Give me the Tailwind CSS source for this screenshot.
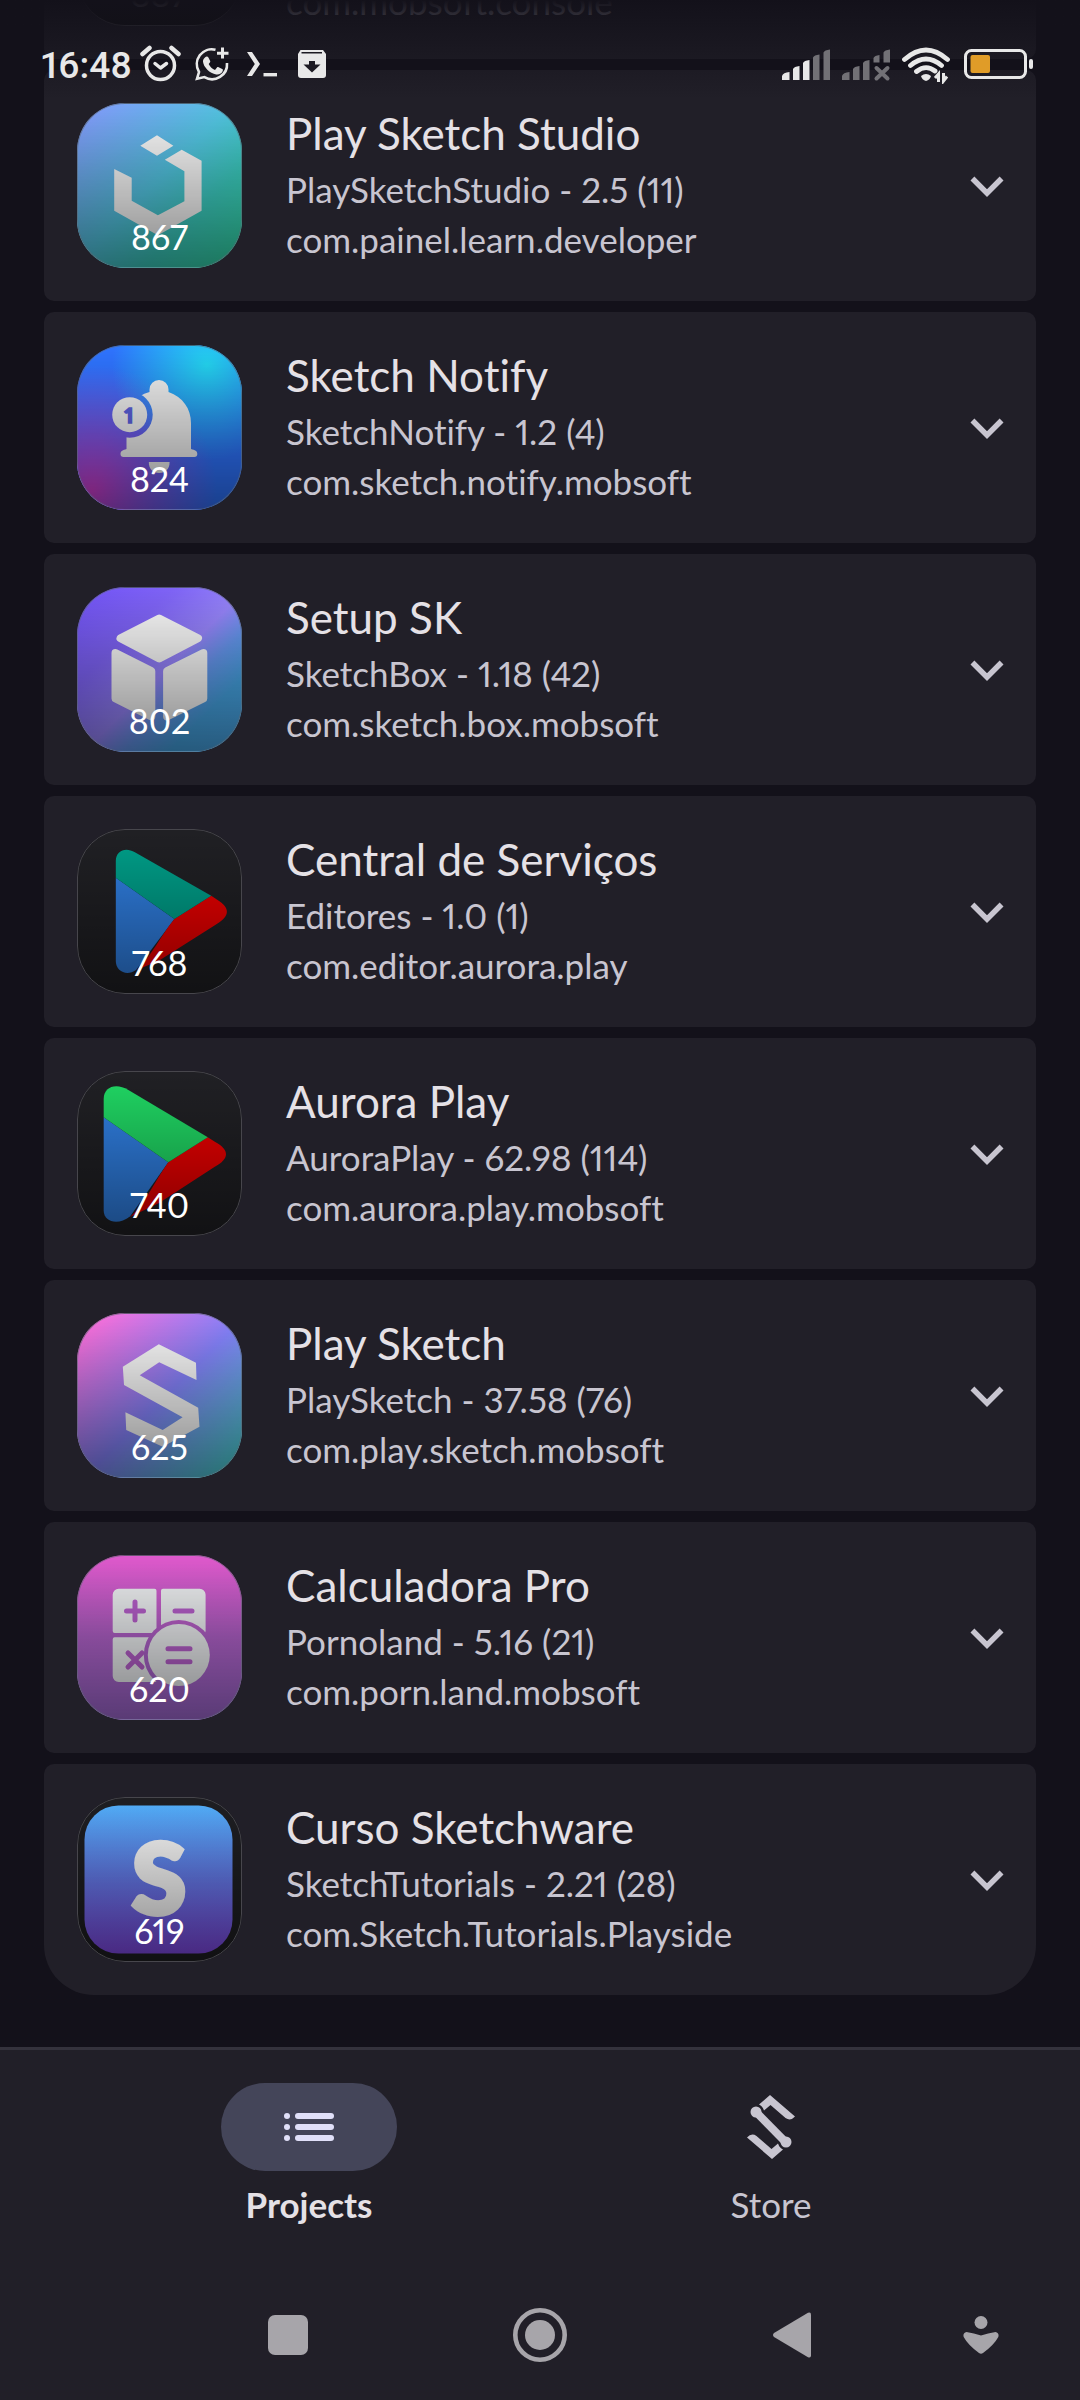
<!DOCTYPE html>
<html lang="en">
<head>
<meta charset="utf-8">
<meta name="viewport" content="width=device-width, initial-scale=1">
<title>Projects</title>
<script src="https://cdn.jsdelivr.net/npm/@tailwindcss/browser@4"></script>
</head>
<body class="relative flex min-h-screen flex-col overflow-x-hidden bg-[#13111a] font-['Lato','Open_Sans',sans-serif] text-[#c8c5d0] proportional-nums [font-variant-ligatures:none]">

<!-- Shared shapes -->
<svg class="hidden" aria-hidden="true">
  <symbol id="chevron" viewBox="0 0 24 24"><path fill="currentColor" d="M7.41 8.59L12 13.17l4.59-4.58L18 10l-6 6-6-6z"/></symbol>
</svg>

<!-- Status bar -->
<header class="absolute inset-x-0 top-0 z-10 flex h-[99px] items-start justify-between bg-linear-to-b from-[#13111a] to-transparent pt-[44px] pr-[46px] pl-[41px] text-[#e8e8e8]">
  <div class="flex h-10 items-center gap-3">
    <time class="w-[87px] whitespace-nowrap pt-1 font-['Roboto',sans-serif] text-[37px] leading-10 font-medium">16:48</time>
    <svg class="h-10 w-[42px]" viewBox="140 44 42 40" fill="none" stroke="currentColor" role="img" aria-label="Alarm">
      <circle cx="160.500" cy="65.500" r="14" stroke-width="3.500"/>
      <path d="M142.500 54l7-6M178.500 54l-7-6" stroke-width="4.500" stroke-linecap="round"/>
      <path d="M155 63.500l5.500 4.500 6-4.500" stroke-width="3.500" stroke-linecap="round" stroke-linejoin="round"/>
    </svg>
    <svg class="h-10 w-9" viewBox="194 44 36 40" fill="none" stroke="currentColor" role="img" aria-label="WhatsApp">
      <path d="M215.500 49.700A15 15 0 0 0 199 72l-2 6.800 7.400-1.700A15 15 0 0 0 227 63" stroke-width="2.600"/>
      <path d="M222.500 47.500v11M217 53.200h11.500" stroke-width="3"/>
      <path fill="currentColor" stroke="none" d="M205.200 57.200c1-1 2.600-1 3.200.2l1.800 3.700c.3.700-.2 1.500-1.500 3 1.500 3 3.500 4.800 6.300 5.800l2-2.300c.5-.6 1-.6 1.600-.3l3.600 1.800c.8.400.8 1 .5 2-.8 2.400-3.800 3.900-6.500 3.400-6.700-1.300-12.500-7.300-13.200-12.800-.2-1.700.8-3.300 2.200-4.500z"/>
    </svg>
    <svg class="h-10 w-10" viewBox="242 44 40 40" fill="currentColor" role="img" aria-label="Terminal">
      <path d="M247 52h5l8 12-8 12h-5l7.800-12z"/><path d="M263.500 73h13.500v3.400h-13.500z"/>
    </svg>
    <svg class="h-10 w-9" viewBox="294 44 36 40" role="img" aria-label="Download">
      <path fill="currentColor" d="M300.500 50h22.500l3 4v21a3 3 0 0 1-3 3h-22a3 3 0 0 1-3-3V54z"/>
      <path fill="#1c1a22" d="M301.500 52h20.500v1.500h-20.500zM309 61h6v3.500h5.500l-8.500 8-8.500-8h5.500z"/>
    </svg>
  </div>
  <div class="flex h-10 items-center gap-2">
    <svg class="h-10 w-[52px]" viewBox="780 44 52 40" fill="currentColor" role="img" aria-label="Signal">
      <path d="M782 80v-4q1-3.500 7.500-4v8zM793 80V69q1-2.500 6.500-3v14zM803 80V63q1-2.500 6.500-3v20z"/>
      <path fill="#727176" d="M813 80V57.500q1-2.500 6.500-3V80zM823.500 80V52.500q1-2.500 6.500-3V80z"/>
    </svg>
    <svg class="h-10 w-[52px]" viewBox="840 44 52 40" fill="#727176" role="img" aria-label="No service">
      <path d="M842 80v-4q1-3.500 7.500-4v8zM853 80V69q1-2.500 6.500-3v14zM863 80V63q1-2.500 6.500-3v20zM873.500 62.500V58q1-2.500 6-3v7.500zM883.500 62.500v-10q1-2.500 6.500-3v13z"/>
      <path d="M876.500 68l11 10.500M887.500 68l-11 10.500" stroke="#727176" stroke-width="4" stroke-linecap="round"/>
    </svg>
    <svg class="h-10 w-[52px]" viewBox="900 44 52 40" fill="none" stroke="currentColor" role="img" aria-label="Wi-Fi">
      <path d="M904.500 59.500Q926 40.500 947.500 59.500M910.500 65.500Q926 52.500 941.500 65.500M916.500 71.500Q926 64 935 71" stroke-width="4.800" stroke-linecap="round"/>
      <path fill="currentColor" stroke="none" d="M921 76q5-4 10 0-1 4-5 5-4-1-5-5z"/>
      <path d="M938.500 82v-8l-3.500 4M943.500 73v8l3.500-4.500" stroke-width="3"/>
    </svg>
    <svg class="h-10 w-[74px]" viewBox="960 44 74 40" role="img" aria-label="Battery">
      <rect x="965.500" y="50.500" width="60" height="27" rx="6" fill="none" stroke="currentColor" stroke-width="3"/>
      <rect x="970.500" y="55" width="19.500" height="18" rx="2" fill="#e09c28"/>
      <rect x="1029" y="59" width="4" height="10" rx="2" fill="currentColor"/>
    </svg>
  </div>
</header>

<main class="flex-1 px-[44px] pb-[52px]">
<ul class="flex flex-col gap-[11px]">

  <li class="flex h-[59px] items-end gap-[44px] overflow-hidden rounded-b-[10px] bg-[#211f28] px-[33px] pb-[33px]">
    <div class="relative size-[165px] shrink-0 overflow-hidden rounded-[48px] border border-[#47464c] bg-[#1a1a1e]">
      <div class="absolute inset-0 flex items-end justify-center bg-linear-to-b from-transparent to-black/45 pb-[11px] text-[34px] leading-10 text-white/70">887</div>
    </div>
    <p class="text-[35px] leading-[50px]">com.mobsoft.console</p>
  </li>

  <li class="flex items-center gap-[44px] rounded-[10px] bg-[#211f28] py-[33px] pr-4 pl-[33px]">
    <div class="relative size-[165px] shrink-0 overflow-hidden rounded-[48px]">
      <svg class="size-full" viewBox="0 0 165 165" aria-hidden="true">
        <defs><linearGradient id="g1" x1="0" y1="0" x2="1" y2="1"><stop offset=".08" stop-color="#7f9ffa"/><stop offset=".48" stop-color="#52c4e0"/><stop offset=".7" stop-color="#3ccdc0"/><stop offset="1" stop-color="#32dca6"/></linearGradient></defs>
        <path fill="url(#g1)" d="M0 0h165v165H0z"/>
        <path fill="#f8f8f8" d="M80 32.300l16.400 10.400L80 52.700 63.300 42.700zM104.700 46.700l19.900 11v50L80.900 132.300 37.200 107.700V66l17.500 8.700v23l26.200 14.600 26.500-14V68.300L87.800 56.700z"/>
      </svg>
      <div class="absolute inset-0 flex items-end justify-center rounded-[48px] border border-[#5a6670]/60 bg-linear-to-b from-transparent to-black/45 pb-[10px] text-[34px] leading-10 text-white">867</div>
    </div>
    <div class="min-w-0 flex-1 self-start pt-[2px]">
      <h2 class="mb-[3px] text-[44px] leading-[56px] text-[#e5e1e6]">Play Sketch Studio</h2>
      <p class="text-[35px] leading-[50px]">PlaySketchStudio - 2.5 (11)</p>
      <p class="text-[35px] leading-[50px]">com.painel.learn.developer</p>
    </div>
    <button type="button" aria-label="Expand Play Sketch Studio"><svg class="size-[66px]"><use href="#chevron"/></svg></button>
  </li>

  <li class="flex items-center gap-[44px] rounded-[10px] bg-[#211f28] py-[33px] pr-4 pl-[33px]">
    <div class="relative size-[165px] shrink-0 overflow-hidden rounded-[48px]">
      <svg class="size-full" viewBox="0 0 165 165" aria-hidden="true">
        <defs>
          <radialGradient id="g2a" gradientUnits="userSpaceOnUse" cx="130" cy="20" r="95"><stop offset="0" stop-color="#24d6f2"/><stop offset="1" stop-color="#24d6f2" stop-opacity="0"/></radialGradient>
          <radialGradient id="g2b" gradientUnits="userSpaceOnUse" cx="15" cy="145" r="125"><stop offset="0" stop-color="#d03fd0"/><stop offset="1" stop-color="#b040e0" stop-opacity="0"/></radialGradient>
          <mask id="m2"><path fill="#fff" d="M0 0h165v165H0z"/><circle cx="52.700" cy="69.700" r="23"/></mask>
        </defs>
        <path fill="#2f74ff" d="M0 0h165v165H0z"/><path fill="url(#g2b)" d="M0 0h165v165H0z"/><path fill="url(#g2a)" d="M0 0h165v165H0z"/>
        <g fill="#f2f2f2">
          <path mask="url(#m2)" d="M49.500 104V78C49.500 62 58 51 72.500 47v-2.500a9.500 9.500 0 0 1 19 0V47C106 52 114 64 114 78v26c4 1 6.300 2 6.300 5a3 3 0 0 1-3 3H46.500a3 3 0 0 1-3-3c0-3 2.500-4 6-5z"/>
          <circle cx="52.700" cy="69.700" r="17.500"/>
          <path d="M71.800 117h20.800c0 7-4 11-10.400 11s-10.400-4-10.400-11z"/>
        </g>
        <text x="52" y="77.500" text-anchor="middle" font-family="Lato" font-weight="900" font-size="21" fill="#5c62e0" stroke="#5c62e0" stroke-width="1.500">1</text>
      </svg>
      <div class="absolute inset-0 flex items-end justify-center rounded-[48px] border border-[#5a6670]/60 bg-linear-to-b from-transparent to-black/45 pb-[10px] text-[34px] leading-10 text-white">824</div>
    </div>
    <div class="min-w-0 flex-1 self-start pt-[2px]">
      <h2 class="mb-[3px] text-[44px] leading-[56px] text-[#e5e1e6]">Sketch Notify</h2>
      <p class="text-[35px] leading-[50px]">SketchNotify - 1.2 (4)</p>
      <p class="text-[35px] leading-[50px]">com.sketch.notify.mobsoft</p>
    </div>
    <button type="button" aria-label="Expand Sketch Notify"><svg class="size-[66px]"><use href="#chevron"/></svg></button>
  </li>

  <li class="flex items-center gap-[44px] rounded-[10px] bg-[#211f28] py-[33px] pr-4 pl-[33px]">
    <div class="relative size-[165px] shrink-0 overflow-hidden rounded-[48px]">
      <svg class="size-full" viewBox="0 0 165 165" aria-hidden="true">
        <defs><linearGradient id="g3" x1="0" y1="0" x2="1" y2="1"><stop offset="0" stop-color="#7253f7"/><stop offset=".3" stop-color="#7f64f6"/><stop offset=".52" stop-color="#9684fa"/><stop offset=".64" stop-color="#6597ee"/><stop offset=".78" stop-color="#46a5e4"/><stop offset="1" stop-color="#4aa6e8"/></linearGradient></defs>
        <path fill="url(#g3)" d="M0 0h165v165H0z"/>
        <path fill="#f8f8f8" stroke="#f8f8f8" stroke-width="8" stroke-linejoin="round" d="M82.200 31.500L121 51.300 82.200 71.500 43.500 51.300zM38.500 66L74.300 84v45.500L38.500 111.500zM126.300 66L90.100 84v45.500l36.200-18z"/>
      </svg>
      <div class="absolute inset-0 flex items-end justify-center rounded-[48px] border border-[#5a6670]/60 bg-linear-to-b from-transparent to-black/45 pb-[10px] text-[34px] leading-10 text-white">802</div>
    </div>
    <div class="min-w-0 flex-1 self-start pt-[2px]">
      <h2 class="mb-[3px] text-[44px] leading-[56px] text-[#e5e1e6]">Setup SK</h2>
      <p class="text-[35px] leading-[50px]">SketchBox - 1.18 (42)</p>
      <p class="text-[35px] leading-[50px]">com.sketch.box.mobsoft</p>
    </div>
    <button type="button" aria-label="Expand Setup SK"><svg class="size-[66px]"><use href="#chevron"/></svg></button>
  </li>

  <li class="flex items-center gap-[44px] rounded-[10px] bg-[#211f28] py-[33px] pr-4 pl-[33px]">
    <div class="relative size-[165px] shrink-0 overflow-hidden rounded-[48px] bg-[#202024]">
      <svg class="size-full" viewBox="0 0 165 165" aria-hidden="true">
        <path fill="#3080e4" d="M38.800 48.700L97.400 90 59 141c-9 6.500-20.200 1.500-20.200-9z"/>
        <path fill="#ee0000" d="M134.200 66.700l6 4c13 8 13 16 0 24L83 131 60 141c14-13 24-35 37.400-51z"/>
        <path fill="#00a08a" d="M38.800 48.700V32c0-10.500 10-14.500 19.100-8.700l76.300 43.400L97.400 90z"/>
      </svg>
      <div class="absolute inset-0 flex items-end justify-center rounded-[48px] border border-[#47464c] bg-linear-to-b from-transparent to-black/45 pb-[10px] text-[34px] leading-10 text-white">768</div>
    </div>
    <div class="min-w-0 flex-1 self-start pt-[2px]">
      <h2 class="mb-[3px] text-[44px] leading-[56px] text-[#e5e1e6]">Central de Serviços</h2>
      <p class="text-[35px] leading-[50px]">Editores - 1.0 (1)</p>
      <p class="text-[35px] leading-[50px]">com.editor.aurora.play</p>
    </div>
    <button type="button" aria-label="Expand Central de Serviços"><svg class="size-[66px]"><use href="#chevron"/></svg></button>
  </li>

  <li class="flex items-center gap-[44px] rounded-[10px] bg-[#211f28] py-[33px] pr-4 pl-[33px]">
    <div class="relative size-[165px] shrink-0 overflow-hidden rounded-[48px] bg-[#202024]">
      <svg class="size-full" viewBox="0 0 165 165" aria-hidden="true">
        <path fill="#3080e4" d="M26.700 46.300L91.300 91.300 53 145.500c-12 9.500-26.300 5.500-26.300-6z"/>
        <path fill="#ee0000" d="M130.800 66.300l7 4.500c15 8 15 17 0 25L82 132l-29 14c15-13 25-36 38.300-54.700z"/>
        <path fill="#20d864" d="M26.700 46.300V28c0-12 12-16.500 24.700-9l79.400 47.300-39.500 25z"/>
      </svg>
      <div class="absolute inset-0 flex items-end justify-center rounded-[48px] border border-[#47464c] bg-linear-to-b from-transparent to-black/45 pb-[10px] text-[34px] leading-10 text-white">740</div>
    </div>
    <div class="min-w-0 flex-1 self-start pt-[2px]">
      <h2 class="mb-[3px] text-[44px] leading-[56px] text-[#e5e1e6]">Aurora Play</h2>
      <p class="text-[35px] leading-[50px]">AuroraPlay - 62.98 (114)</p>
      <p class="text-[35px] leading-[50px]">com.aurora.play.mobsoft</p>
    </div>
    <button type="button" aria-label="Expand Aurora Play"><svg class="size-[66px]"><use href="#chevron"/></svg></button>
  </li>

  <li class="flex items-center gap-[44px] rounded-[10px] bg-[#211f28] py-[33px] pr-4 pl-[33px]">
    <div class="relative size-[165px] shrink-0 overflow-hidden rounded-[48px]">
      <svg class="size-full" viewBox="0 0 165 165" aria-hidden="true">
        <defs><linearGradient id="g6" x1="0" y1="0" x2="1" y2="1"><stop offset=".08" stop-color="#f871de"/><stop offset=".52" stop-color="#8583fb"/><stop offset="1" stop-color="#44dcd0"/></linearGradient></defs>
        <path fill="url(#g6)" d="M0 0h165v165H0z"/>
        <path fill="#f8f8f8" d="M81.800 31.300L119 49.700l.5 17.300-37.300-17.700-19.500 13L121.200 94.700l1.300 19-36.800 20L49.200 117l-.8-17.700L85.700 117l19.900-12.700L47 72l-1.200-18.300z"/>
      </svg>
      <div class="absolute inset-0 flex items-end justify-center rounded-[48px] border border-[#5a6670]/60 bg-linear-to-b from-transparent to-black/45 pb-[10px] text-[34px] leading-10 text-white">625</div>
    </div>
    <div class="min-w-0 flex-1 self-start pt-[2px]">
      <h2 class="mb-[3px] text-[44px] leading-[56px] text-[#e5e1e6]">Play Sketch</h2>
      <p class="text-[35px] leading-[50px]">PlaySketch - 37.58 (76)</p>
      <p class="text-[35px] leading-[50px]">com.play.sketch.mobsoft</p>
    </div>
    <button type="button" aria-label="Expand Play Sketch"><svg class="size-[66px]"><use href="#chevron"/></svg></button>
  </li>

  <li class="flex items-center gap-[44px] rounded-[10px] bg-[#211f28] py-[33px] pr-4 pl-[33px]">
    <div class="relative size-[165px] shrink-0 overflow-hidden rounded-[48px]">
      <svg class="size-full" viewBox="0 0 165 165" aria-hidden="true">
        <defs>
          <linearGradient id="g7" x1="0" y1="0" x2="0" y2="1"><stop offset=".05" stop-color="#de5acd"/><stop offset=".5" stop-color="#b061c8"/><stop offset="1" stop-color="#a36cd6"/></linearGradient>
          <mask id="m7"><path fill="#fff" d="M0 0h165v165H0z"/><circle cx="101.800" cy="100" r="35"/></mask>
        </defs>
        <path fill="url(#g7)" d="M0 0h165v165H0z"/>
        <g fill="#eceef0">
          <g mask="url(#m7)">
            <path d="M41.700 33.700h35.800a2 2 0 0 1 2 2V76a2 2 0 0 1-2 2H37.700a2 2 0 0 1-2-2V39.700a6 6 0 0 1 6-6zM86 33.700h36.600a6 6 0 0 1 6 6V76a2 2 0 0 1-2 2H86a2 2 0 0 1-2-2V35.700a2 2 0 0 1 2-2zM37.700 82.300h39.800a2 2 0 0 1 2 2V127H41.700a6 6 0 0 1-6-6V84.300a2 2 0 0 1 2-2z"/>
          </g>
          <circle cx="101.800" cy="100" r="31"/>
        </g>
        <path fill="none" stroke="#b65fca" stroke-width="5" stroke-linecap="round" d="M49.500 56h17M58 47v18M98 56h17M51 98l14 14M65 98l-14 14M91 93.700h22M91 106.700h22"/>
      </svg>
      <div class="absolute inset-0 flex items-end justify-center rounded-[48px] border border-[#5a6670]/60 bg-linear-to-b from-transparent to-black/45 pb-[10px] text-[34px] leading-10 text-white">620</div>
    </div>
    <div class="min-w-0 flex-1 self-start pt-[2px]">
      <h2 class="mb-[3px] text-[44px] leading-[56px] text-[#e5e1e6]">Calculadora Pro</h2>
      <p class="text-[35px] leading-[50px]">Pornoland - 5.16 (21)</p>
      <p class="text-[35px] leading-[50px]">com.porn.land.mobsoft</p>
    </div>
    <button type="button" aria-label="Expand Calculadora Pro"><svg class="size-[66px]"><use href="#chevron"/></svg></button>
  </li>

  <li class="flex items-center gap-[44px] rounded-t-[10px] rounded-b-[50px] bg-[#211f28] py-[33px] pr-4 pl-[33px]">
    <div class="relative size-[165px] shrink-0 overflow-hidden rounded-[48px] bg-[#1e1e22]">
      <svg class="size-full" viewBox="0 0 165 165" aria-hidden="true">
        <defs><linearGradient id="g8" x1="0" y1="0" x2="0" y2="1"><stop offset="0" stop-color="#52aefa"/><stop offset=".5" stop-color="#6478e8"/><stop offset="1" stop-color="#8049e4"/></linearGradient></defs>
        <rect x="7.500" y="8.500" width="148" height="148" rx="34" fill="url(#g8)"/>
        <text x="82" y="117" text-anchor="middle" font-family="Lato" font-weight="900" font-size="98" fill="#f6f6f6" stroke="#f6f6f6" stroke-width="5">S</text>
      </svg>
      <div class="absolute inset-0 flex items-end justify-center rounded-[48px] border border-[#47464c] bg-linear-to-b from-transparent to-black/45 pb-[10px] text-[34px] leading-10 text-white">619</div>
    </div>
    <div class="min-w-0 flex-1 self-start pt-[2px]">
      <h2 class="mb-[3px] text-[44px] leading-[56px] text-[#e5e1e6]">Curso Sketchware</h2>
      <p class="text-[35px] leading-[50px]">SketchTutorials - 2.21 (28)</p>
      <p class="text-[35px] leading-[50px]">com.Sketch.Tutorials.Playside</p>
    </div>
    <button type="button" aria-label="Expand Curso Sketchware"><svg class="size-[66px]"><use href="#chevron"/></svg></button>
  </li>
</ul>
</main>

<nav class="flex h-[223px] justify-center border-t-[3px] border-[#34323c] bg-[#211f28] pt-[33px] text-[35px] leading-[42px]">
  <a href="#projects" aria-current="page" class="flex max-w-[462px] flex-1 flex-col items-center gap-3 font-bold text-[#e5e1e6]">
    <span class="flex h-[88px] w-[176px] items-center justify-center rounded-full bg-[#444559]">
      <svg class="h-7 w-[50px]" viewBox="0 0 50 28" fill="#e1e0f9" aria-hidden="true">
        <circle cx="3" cy="3" r="3"/><circle cx="3" cy="14" r="3"/><circle cx="3" cy="25" r="3"/>
        <rect x="11" width="39" height="6" rx="3"/><rect x="11" y="11" width="39" height="6" rx="3"/><rect x="11" y="22" width="39" height="6" rx="3"/>
      </svg>
    </span>
    Projects
  </a>
  <a href="#store" class="flex max-w-[462px] flex-1 flex-col items-center gap-3">
    <span class="flex h-[88px] items-center">
      <svg class="h-16 w-12" viewBox="0 0 48 64" fill="#c8c5d0" aria-hidden="true">
        <path d="M23 0L48 21.500q-4.500 5-9.500 1.500L23.500 10l-6.500 5.500Q15.500 11 12 9.500z"/>
        <path d="M25 64L0 42.500q4.500-5 9.500-1.500L24.500 54l6.500-5.500q1.500 4.500 5 6z"/>
        <path d="M9 17L39 47.500" stroke="#c8c5d0" stroke-width="8"/>
        <circle cx="9" cy="17" r="5.500"/><circle cx="39" cy="47" r="5.500"/>
      </svg>
    </span>
    Store
  </a>
</nav>

<!-- System navigation keys -->
<footer class="grid h-[130px] grid-cols-[162fr_252fr_252fr_252fr_126fr_36fr] items-center justify-items-center bg-[#211f28] text-[#a7a5aa]">
  <button type="button" aria-label="Recent apps" class="col-start-2"><svg class="size-10" viewBox="0 0 40 40" fill="currentColor"><rect width="40" height="40" rx="7"/></svg></button>
  <button type="button" aria-label="Home"><svg class="size-[54px]" viewBox="0 0 54 54"><circle cx="27" cy="27" r="24.700" fill="none" stroke="currentColor" stroke-width="4.600"/><circle cx="27" cy="27" r="15" fill="currentColor"/></svg></button>
  <button type="button" aria-label="Back"><svg class="h-[46px] w-[38px]" viewBox="0 0 38 46" fill="currentColor"><path d="M1 21L35 .8q3-1.300 3 2v40.400q0 3.300-3 2L1 25q-2-2 0-4z"/></svg></button>
  <button type="button" aria-label="Hide keys"><svg class="h-[38px] w-9" viewBox="0 0 36 38" fill="currentColor"><circle cx="18" cy="6.500" r="6.500"/><path d="M3.500 16Q11 17 18 19.500 25 17 32.500 16 36.500 17 35.300 21 31 29 20 37q-2 1.500-4 0Q5 29 .7 21-.5 17 3.500 16z"/></svg></button>
</footer>

</body>
</html>
